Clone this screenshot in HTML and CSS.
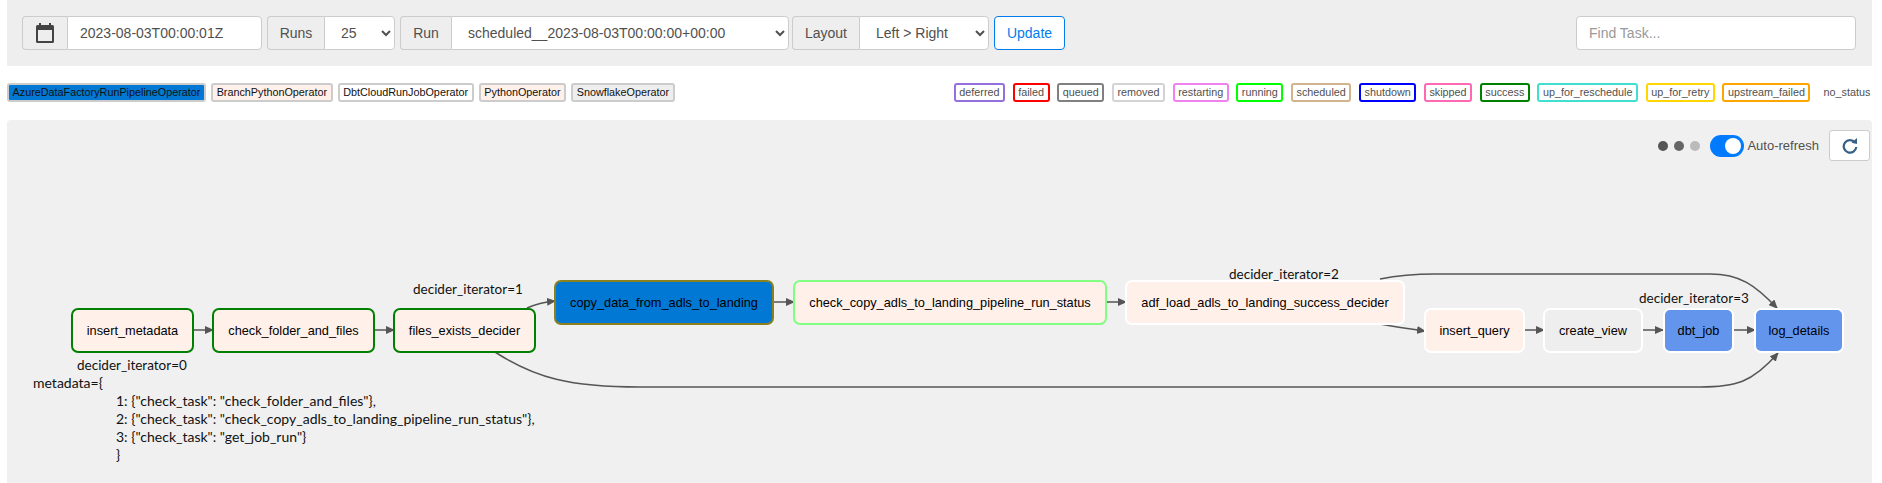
FILE: index.html
```html
<!DOCTYPE html>
<html lang="en">
  <head>
    <meta charset="UTF-8">
    <meta name="viewport" content="width=device-width">
    <title>Graph</title>
    <link rel="stylesheet" href="styles.css">
  </head>
  <body>
    <form class="toolbar">
      <div class="group date-group">
        <span class="addon cal-addon">
          <svg width="18" height="20" viewBox="0 0 18 20"><path fill="#444" d="M3 0h2v2h8V0h2v2h1.5A1.5 1.5 0 0 1 18 3.500V18.500A1.500 1.500 0 0 1 16.500 20H1.500A1.500 1.500 0 0 1 0 18.500V3.500A1.500 1.500 0 0 1 1.500 2H3zM2 7v11h14V7z"/></svg>
        </span>
        <input class="field date-field" type="text" value="2023-08-03T00:00:01Z">
      </div>
      <div class="group runs-group">
        <span class="addon runs-addon">Runs</span>
        <select class="field"><option>25</option></select>
      </div>
      <div class="group run-group">
        <span class="addon run-addon">Run</span>
        <select class="field"><option>scheduled__2023-08-03T00:00:00+00:00</option></select>
      </div>
      <div class="group layout-group">
        <span class="addon layout-addon">Layout</span>
        <select class="field"><option>Left &gt; Right</option></select>
      </div>
      <button type="button" class="update">Update</button>
      <input class="find" type="text" placeholder="Find Task...">
    </form>

    <div class="legend">
      <div class="chips">
        <span class="chip op-azure">AzureDataFactoryRunPipelineOperator</span>
        <span class="chip op-branch">BranchPythonOperator</span>
        <span class="chip op-dbt">DbtCloudRunJobOperator</span>
        <span class="chip op-python">PythonOperator</span>
        <span class="chip op-snow">SnowflakeOperator</span>
      </div>
      <div class="chips states">
        <span class="chip st-deferred">deferred</span>
        <span class="chip st-failed">failed</span>
        <span class="chip st-queued">queued</span>
        <span class="chip st-removed">removed</span>
        <span class="chip st-restarting">restarting</span>
        <span class="chip st-running">running</span>
        <span class="chip st-scheduled">scheduled</span>
        <span class="chip st-shutdown">shutdown</span>
        <span class="chip st-skipped">skipped</span>
        <span class="chip st-success">success</span>
        <span class="chip st-reschedule">up_for_reschedule</span>
        <span class="chip st-retry">up_for_retry</span>
        <span class="chip st-upstream">upstream_failed</span>
        <span class="chip st-none">no_status</span>
      </div>
    </div>

    <main class="panel">
      <svg class="graph" width="1866" height="363" viewBox="7 120 1866 363">
        <defs>
          <marker id="arrow" markerWidth="9" markerHeight="8" refX="8" refY="4" orient="auto" markerUnits="userSpaceOnUse">
            <path d="M0 0L9 4L0 8z" fill="#555"/>
          </marker>
        </defs>

        <!-- edges -->
        <g class="edges">
          <path d="M193 330H213"/>
          <path d="M374 330H394"/>
          <path d="M527 308C536 304 545 302 555 301"/>
          <path d="M773 302H794"/>
          <path d="M1106 302H1126"/>
          <path d="M1380 279C1395 276 1408 274 1435 274H1710C1740 274 1755 285 1777 308"/>
          <path d="M1380 324C1395 327 1410 329 1425 331"/>
          <path d="M1524 330H1544"/>
          <path d="M1642 330H1663"/>
          <path d="M1733 330H1755"/>
          <path d="M495 352C535 378 570 387 640 387H1700C1735 387 1752 383 1778 353"/>
        </g>

        <!-- nodes -->
        <g class="node op-python-node done">
          <rect x="72" y="309" width="121" height="43" rx="6"/>
          <text x="132.500" y="335">insert_metadata</text>
        </g>
        <g class="node op-python-node done">
          <rect x="213" y="309" width="161" height="43" rx="6"/>
          <text x="293.500" y="335">check_folder_and_files</text>
        </g>
        <g class="node op-python-node done">
          <rect x="394" y="309" width="141" height="43" rx="6"/>
          <text x="464.500" y="335">files_exists_decider</text>
        </g>
        <g class="node op-azure-node">
          <rect x="555" y="281" width="218" height="43" rx="6"/>
          <text x="664" y="307">copy_data_from_adls_to_landing</text>
        </g>
        <g class="node op-python-node active">
          <rect x="794" y="281" width="312" height="43" rx="6"/>
          <text x="950" y="307">check_copy_adls_to_landing_pipeline_run_status</text>
        </g>
        <g class="node op-python-node">
          <rect x="1126" y="281" width="278" height="43" rx="6"/>
          <text x="1265" y="307">adf_load_adls_to_landing_success_decider</text>
        </g>
        <g class="node op-python-node">
          <rect x="1425" y="309" width="99" height="43" rx="6"/>
          <text x="1474.500" y="335">insert_query</text>
        </g>
        <g class="node op-snow-node">
          <rect x="1544" y="309" width="98" height="43" rx="6"/>
          <text x="1593" y="335">create_view</text>
        </g>
        <g class="node op-dbt-node">
          <rect x="1664" y="309" width="69" height="43" rx="6"/>
          <text x="1698.500" y="335">dbt_job</text>
        </g>
        <g class="node op-dbt-node">
          <rect x="1755" y="309" width="88" height="43" rx="6"/>
          <text x="1799" y="335">log_details</text>
        </g>

        <!-- notes -->
        <g class="notes">
          <text x="77" y="370">decider_iterator=0</text>
          <text x="413" y="294">decider_iterator=1</text>
          <text x="1229" y="279">decider_iterator=2</text>
          <text x="1639" y="303">decider_iterator=3</text>
        </g>
        <g class="notes metadata">
          <text x="33" y="388">metadata={</text>
          <text x="116" y="406">1: {"check_task": "check_folder_and_files"},</text>
          <text x="116" y="424">2: {"check_task": "check_copy_adls_to_landing_pipeline_run_status"},</text>
          <text x="116" y="442">3: {"check_task": "get_job_run"}</text>
          <text x="116" y="460">}</text>
        </g>
      </svg>

      <div class="refresh">
        <span class="dots"><i class="dot"></i><i class="dot mid"></i><i class="dot light"></i></span>
        <span class="toggle"><i class="knob"></i></span>
        <span class="refresh-label">Auto-refresh</span>
        <button type="button" class="reload">
          <svg width="16" height="18" viewBox="0 0 16 18"><path fill="none" stroke="#365f85" stroke-width="2.200" d="M13 5.500A6.300 6.300 0 1 0 14.300 10"/><path fill="#365f85" d="M9.500 5.800L15 7V1z"/></svg>
        </button>
      </div>
    </main>
  </body>
</html>
```
FILE: styles.css
```css
* {
  box-sizing: border-box;
}
html, body {
  margin: 0;
  height: 483px;
  overflow: hidden;
}
body {
  background: #fff;
  color: #51504f;
  font-family: "Liberation Sans", Arial, sans-serif;
  font-size: 14px;
}

/* Top toolbar */
.toolbar {
  display: flex;
  align-items: center;
  gap: 5px;
  height: 66px;
  margin: 0 10px 0 7px;
  padding: 0 16px 0 15px;
  background: #eee;
}
.group {
  display: flex;
  height: 34px;
}
.addon {
  display: flex;
  align-items: center;
  justify-content: center;
  background: #eee;
  border: 1px solid #ccc;
  border-right: 0;
  border-radius: 4px 0 0 4px;
}
.field {
  height: 34px;
  padding: 0 12px;
  background: #fff;
  border: 1px solid #ccc;
  border-radius: 0 4px 4px 0;
  color: #51504f;
  font: inherit;
}
.cal-addon { width: 45px; }
.date-field { width: 195px; }
.runs-addon { width: 57px; }
.runs-group .field { width: 71px; }
.run-addon { width: 51px; }
.run-group .field { width: 338px; }
.layout-group { margin-left: -2px; }
.layout-addon { width: 67px; }
.layout-group .field { width: 130px; }
.update {
  width: 71px;
  height: 34px;
  background: #fff;
  border: 1px solid #017cee;
  border-radius: 4px;
  color: #017cee;
  font: inherit;
}
.find {
  width: 280px;
  height: 34px;
  margin-left: auto;
  padding: 0 12px;
  border: 1px solid #ccc;
  border-radius: 4px;
  font: inherit;
}
.find::placeholder {
  color: #999;
}

/* Legend */
.legend {
  display: flex;
  justify-content: space-between;
  align-items: center;
  height: 54px;
  padding: 0 6px 1px 7px;
}
.chips {
  display: flex;
  gap: 5px;
}
.states {
  gap: 7.500px;
}
.chip {
  padding: 0 3.600px;
  height: 19px;
  line-height: 15px;
  border: 2px solid #ccc;
  border-radius: 3px;
  font-size: 10.800px;
  white-space: nowrap;
}
.chips:first-child .chip {
  color: #111;
}
.op-azure { background: #0078d4; }
.op-branch { background: #fff0ea; }
.op-dbt { background: #fff; }
.op-python { background: #fff0ea; }
.op-snow { background: #eee; }
.st-deferred { border-color: #9370db; }
.st-failed { border-color: #f00; }
.st-queued { border-color: #808080; }
.st-removed { border-color: #d3d3d3; }
.st-restarting { border-color: #ee82ee; }
.st-running { border-color: #0f0; }
.st-scheduled { border-color: #d2b48c; }
.st-shutdown { border-color: #00f; }
.st-skipped { border-color: #ff69b4; }
.st-success { border-color: #008000; }
.st-reschedule { border-color: #40e0d0; }
.st-retry { border-color: #ffd700; }
.st-upstream { border-color: #ffa500; }
.st-none { border-color: transparent; }

/* Graph panel */
.panel {
  position: relative;
  height: 363px;
  margin: 0 10px 0 7px;
  background: #f0f0f0;
  border-radius: 4px 4px 0 0;
}
.graph {
  position: absolute;
  left: 0;
  top: 0;
}
.edges path {
  fill: none;
  stroke: #555;
  stroke-width: 1.500;
  marker-end: url(#arrow);
}
.node rect {
  fill: #fff0ea;
  stroke: #fff;
  stroke-width: 2;
}
.node text {
  fill: #000;
  font-family: "Liberation Sans", Arial, sans-serif;
  font-size: 12.750px;
  text-anchor: middle;
}
.node.done rect { stroke: #008000; }
.node.active rect { stroke: #80ff80; }
.op-azure-node rect {
  fill: #0078d4;
  stroke: #8b8020;
}
.op-snow-node rect { fill: #eee; }
.op-dbt-node rect { fill: #6495ed; }
.notes text {
  fill: #111;
  font-family: Lato, sans-serif;
  font-size: 13.500px;
}
.notes.metadata text {
  font-size: 14px;
}
.refresh {
  position: relative;
  display: flex;
  align-items: center;
  height: 31px;
  margin-top: 0;
  padding: 10px 2px 0 0;
  justify-content: flex-end;
  box-sizing: content-box;
}
.dots {
  display: flex;
  gap: 6px;
  margin-right: 10px;
}
.dot {
  width: 10px;
  height: 10px;
  border-radius: 50%;
  background: #555;
}
.dot.mid { background: #666; }
.dot.light { background: #bbb; }
.toggle {
  display: flex;
  justify-content: flex-end;
  align-items: center;
  width: 34px;
  height: 22px;
  padding: 3px;
  background: #007bff;
  border-radius: 11px;
}
.knob {
  width: 16px;
  height: 16px;
  background: #fff;
  border-radius: 50%;
}
.refresh-label {
  margin: 0 10px 0 3px;
  font-size: 13px;
}
.reload {
  display: flex;
  align-items: center;
  justify-content: center;
  width: 41px;
  height: 31px;
  padding: 0;
  background: #fff;
  border: 1px solid #ccc;
  border-radius: 3px;
}
```
